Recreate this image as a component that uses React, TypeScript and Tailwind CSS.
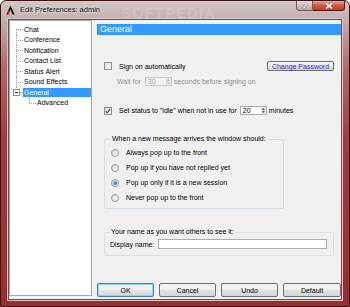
import React from "react";

const rootItems = ["Chat", "Conference", "Notification", "Contact List", "Status Alert", "Sound Effects"];

function Gutter({ first, last, hasLine = true }: { first?: boolean; last?: boolean; hasLine?: boolean }) {
  return (
    <div className="relative h-full w-[13px] shrink-0">
      {hasLine && (
        <div
          className={`absolute left-[6px] border-l border-dotted border-[#a0a0a0] ${first ? "top-1/2" : "top-0"} ${last ? "bottom-1/2" : "bottom-0"}`}
        />
      )}
      <div className="absolute left-[6px] right-0 top-1/2 border-t border-dotted border-[#a0a0a0]" />
    </div>
  );
}

function CheckBox({ checked }: { checked?: boolean }) {
  return (
    <div className="flex h-[8px] w-[8px] shrink-0 items-center justify-center border border-[#8e8f8f] bg-gradient-to-br from-[#dcdcdc] to-[#f8f8f8]">
      {checked && (
        <svg width="6" height="6" viewBox="0 0 6 6">
          <path d="M0.8 3.2 L2.3 4.8 L5.2 0.9" fill="none" stroke="#3b4f8a" strokeWidth="1.2" />
        </svg>
      )}
    </div>
  );
}

function Radio({ checked }: { checked?: boolean }) {
  return (
    <div className="flex h-[8px] w-[8px] shrink-0 items-center justify-center rounded-full border border-[#9c9c9c] bg-gradient-to-br from-[#d4d4d4] to-[#fafafa]">
      {checked && <div className="h-[4px] w-[4px] rounded-full bg-gradient-to-br from-[#8fc0ee] to-[#1f5fae]" />}
    </div>
  );
}

function Spin({ value, disabled }: { value: string; disabled?: boolean }) {
  return (
    <div
      className={`flex h-[9px] w-[27px] shrink-0 border ${disabled ? "border-[#c8c8c8] bg-[#f4f4f4] text-[#9d9d9d]" : "border-[#abadb3] bg-white text-black"}`}
    >
      <span className="flex flex-1 items-center pl-[2px] leading-none">{value}</span>
      <div className="flex w-[5px] flex-col items-center justify-center gap-[1px] border-l border-[#d6d6d6] bg-[#ececec]">
        <svg width="3" height="2" viewBox="0 0 3 2">
          <path d="M0 2 L1.5 0 L3 2 Z" fill={disabled ? "#b0b0b0" : "#4a4a4a"} />
        </svg>
        <svg width="3" height="2" viewBox="0 0 3 2">
          <path d="M0 0 L1.5 2 L3 0 Z" fill={disabled ? "#b0b0b0" : "#4a4a4a"} />
        </svg>
      </div>
    </div>
  );
}

function Btn({ label, primary, className = "" }: { label: string; primary?: boolean; className?: string }) {
  return (
    <button
      className={`flex items-center justify-center rounded-[2px] border leading-none ${primary ? "border-[#3c7fb1] shadow-[inset_0_0_0_1px_#8fd4f5]" : "border-[#707070]"} bg-[linear-gradient(#f5f5f5_0%,#eeeeee_50%,#e2e2e2_51%,#d6d6d6_100%)] ${className}`}
    >
      {label}
    </button>
  );
}

export default function App() {
  return (
    <div className="relative flex h-[307px] w-[350px] flex-col overflow-hidden rounded-t-[6px] border border-[#3e1212] bg-[linear-gradient(#d3c7c7_0%,#c2b0b0_6%,#ad6a6a_22%,#a23c3c_45%,#982e2e_100%)] font-['Liberation_Sans',Arial,sans-serif] text-[7px] text-black">
      {/* title bar */}
      <div className="relative flex h-[18px] shrink-0 items-center">
        <svg className="ml-[5px]" width="9" height="10" viewBox="0 0 9 10">
          <path d="M4.5 0.5 L8.6 9.5 L6.6 9.5 L4.5 4.6 L2.4 9.5 L0.4 9.5 Z" fill="#111" />
          <path d="M1 9.5 L3.2 4.4 L4 6.2 L2.6 9.5 Z" fill="#d02020" />
        </svg>
        <span className="ml-[5px] text-[7.5px] text-[#1a1a1a] [text-shadow:0_0_4px_#fff]">Edit Preferences: admin</span>
        <span className="pointer-events-none absolute left-[120px] top-[1px] text-[15px] font-bold tracking-[1px] text-[#e8d0d0]/40">
          SOFTPEDIA
        </span>
        <div className="absolute right-[4px] top-[-1px] flex">
          <div className="flex h-[11px] w-[17px] items-center justify-center rounded-bl-[3px] border border-[#6e5a5a] bg-[linear-gradient(#e8dede,#b9a3a3)] text-[8px] font-bold text-white [text-shadow:0_0_2px_#333]">
            ?
          </div>
          <div className="flex h-[11px] w-[32px] items-center justify-center rounded-br-[3px] border border-l-0 border-[#5a1a10] bg-[linear-gradient(#e9a595,#cf5a42_50%,#c03a22)]">
            <svg width="8" height="6" viewBox="0 0 8 6">
              <path d="M1 0.5 L7 5.5 M7 0.5 L1 5.5" stroke="#fff" strokeWidth="1.6" />
            </svg>
          </div>
        </div>
      </div>

      {/* client area */}
      <div className="mx-[7px] mb-[6px] flex flex-1 border border-[#7a4a4a] bg-[#f0f0f0] shadow-[0_0_0_1px_#dcc6c6]">
        {/* tree */}
        <div className="mb-[3px] flex w-[83px] shrink-0 flex-col border border-[#a8a8a8] bg-white pt-[3px]">
          {rootItems.map((label, i) => (
            <div key={label} className="flex h-[10.5px] items-center">
              <Gutter first={i === 0} />
              <span className="px-[1px] leading-none">{label}</span>
            </div>
          ))}
          <div className="flex h-[10.5px] items-center">
            <div className="relative h-full w-[13px] shrink-0">
              <div className="absolute left-[6px] top-0 bottom-1/2 border-l border-dotted border-[#a0a0a0]" />
              <div className="absolute left-[10px] right-0 top-1/2 border-t border-dotted border-[#a0a0a0]" />
              <div className="absolute left-[3px] top-[1.5px] flex h-[7px] w-[7px] items-center justify-center border border-[#8f8f8f] bg-white">
                <div className="h-px w-[3px] bg-[#2a2a2a]" />
              </div>
            </div>
            <span className="flex h-[9px] flex-1 items-center bg-[#3399ff] px-[1px] leading-none text-white">General</span>
          </div>
          <div className="flex h-[10.5px] items-center">
            <div className="w-[13px] shrink-0" />
            <Gutter last />
            <span className="px-[1px] leading-none">Advanced</span>
          </div>
        </div>

        {/* settings panel */}
        <div className="flex flex-1 flex-col">
          <div className="mx-[5px] mt-[4px] mr-0 flex h-[11px] items-center bg-[#3399ff] pl-[3px] text-[9px] leading-none text-white">
            General
          </div>

          <div className="flex flex-col pl-[12px] pr-[7px]">
            <div className="mt-[26px] flex h-[10px] items-center">
              <CheckBox />
              <span className="ml-[7px] leading-none">Sign on automatically</span>
              <Btn label="Change Password" className="ml-auto h-[10px] w-[67px] text-[#2b2bd0]" />
            </div>

            <div className="mt-[6px] flex h-[9px] items-center pl-[13px] text-[#8f8f8f]">
              <span className="leading-none">Wait for</span>
              <div className="ml-[4px]">
                <Spin value="30" disabled />
              </div>
              <span className="ml-[2px] leading-none">seconds before signing on</span>
            </div>

            <div className="mt-[20px] flex h-[9px] items-center">
              <CheckBox checked />
              <span className="ml-[7px] leading-none">Set status to "idle" when not in use for</span>
              <div className="ml-[3px]">
                <Spin value="20" />
              </div>
              <span className="ml-[2px] leading-none">minutes</span>
            </div>

            <fieldset className="mt-[20px] w-[180px] rounded-[2px] border border-[#d5dfe5] pb-[3px] pl-[6px] pt-[2px]">
              <legend className="px-[1px] text-[7px] leading-[8px]">When a new message arrives the window should:</legend>
              {[
                "Always pop up to the front",
                "Pop up if you have not replied yet",
                "Pop up only if it is a new session",
                "Never pop up to the front",
              ].map((t, i) => (
                <div key={t} className="flex h-[15px] items-center">
                  <Radio checked={i === 2} />
                  <span className="ml-[7px] leading-none">{t}</span>
                </div>
              ))}
            </fieldset>

            <fieldset className="mt-[19px] w-[230px] rounded-[2px] border border-[#d5dfe5] pb-[6px] pl-[5px] pr-[6px] pt-[3px]">
              <legend className="px-[1px] text-[7px] leading-[8px]">Your name as you want others to see it:</legend>
              <div className="flex h-[10px] items-center">
                <span className="leading-none">Display name:</span>
                <div className="ml-auto h-[10px] w-[169px] border border-[#abadb3] bg-white" />
              </div>
            </fieldset>
          </div>

          <div className="mt-auto mb-[2px] flex gap-[5px] pl-[5px]">
            <Btn label="OK" primary className="h-[14px] w-[57px]" />
            <Btn label="Cancel" className="h-[14px] w-[57px]" />
            <Btn label="Undo" className="h-[14px] w-[57px]" />
            <Btn label="Default" className="h-[14px] w-[58px]" />
          </div>
        </div>
      </div>
    </div>
  );
}
